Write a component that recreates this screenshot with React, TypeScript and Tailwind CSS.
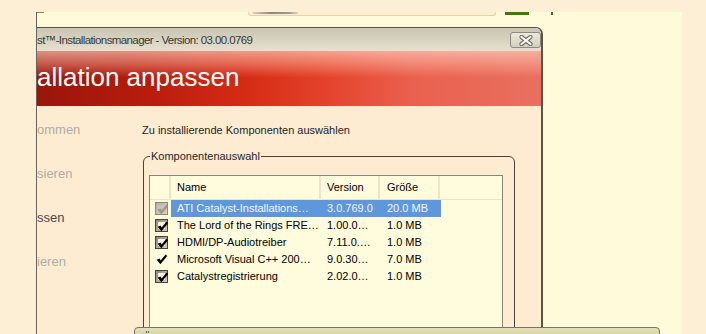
import React from 'react';

const rows = [
  { name: 'ATI Catalyst-Installations…', version: '3.0.769.0', size: '20.0 MB', state: 'disabled', selected: true },
  { name: 'The Lord of the Rings FRE…', version: '1.00.0…', size: '1.0 MB', state: 'box' },
  { name: 'HDMI/DP-Audiotreiber', version: '7.11.0.…', size: '1.0 MB', state: 'box' },
  { name: 'Microsoft Visual C++ 200…', version: '9.0.30…', size: '7.0 MB', state: 'plain' },
  { name: 'Catalystregistrierung', version: '2.02.0…', size: '1.0 MB', state: 'box' },
];

const steps = [
  { label: 'ommen', active: false },
  { label: 'sieren', active: false },
  { label: 'ssen', active: true },
  { label: 'ieren', active: false },
];

function Check({ color }: { color: string }) {
  return (
    <svg width="13" height="13" viewBox="0 0 13 13" className="absolute left-0 top-0">
      <path d="M1.6 6.8 L4.6 5.6 L5.6 7.6 L10.6 1.4 L12.2 3 L5.4 11.2 Z" fill={color} />
    </svg>
  );
}

function CheckCell({ state }: { state: string }) {
  if (state === 'plain') {
    return (
      <div className="relative ml-[5px] w-[13px] h-[13px]">
        <Check color="#000" />
      </div>
    );
  }
  const disabled = state === 'disabled';
  return (
    <div
      className={
        disabled
          ? 'relative ml-[5px] w-[13px] h-[13px] border border-[#8f897a] bg-[linear-gradient(135deg,#b8b2a4,#d6d0c2)] p-[2px]'
          : 'relative ml-[5px] w-[13px] h-[13px] border border-[#4a4334] bg-[linear-gradient(135deg,#8c8371,#d8d0bc)] p-[2px]'
      }
    >
      <div className={disabled ? 'w-full h-full bg-[#c9c3b5]' : 'w-full h-full bg-[#f7f3e6]'} />
      <Check color={disabled ? '#9d978a' : '#000'} />
    </div>
  );
}

export default function App() {
  return (
    <div className="relative w-[706px] h-[334px] overflow-hidden bg-[#fdefd6] font-['Liberation_Sans',Arial,sans-serif]">
      <div className="h-[12px]" />
      <div className="ml-[36px] w-[646px] h-[322px] bg-[#fffad9] border-l border-[#6b6256] flex flex-col">
        {/* strip above the dialog */}
        <div className="h-[15px] flex items-start shrink-0">
          <div className="w-[7px] h-px bg-[#8a8070]" />
          <div className="ml-[204px] w-[248px] h-[4px] border-x border-b border-[#e4d2ae] rounded-b-[3px] bg-[#fcecd2] pl-[4px]">
            <div className="w-[45px] h-[2px] bg-[linear-gradient(90deg,#d8d0c0,#8e887c_40%,#a29a8c_80%,#e0d8c8)]" />
          </div>
          <div className="ml-[9px] w-[24px] h-[3px] bg-[#3b7a05]" />
          <div className="ml-[22px] w-[2px] h-[3px] bg-[#3b7a05]" />
        </div>

        {/* dialog */}
        <div className="w-[506px] flex-1 flex flex-col border-t border-r-2 border-[#5b5346] rounded-tr-[7px] overflow-hidden bg-[#fdecd2]">
          <div className="h-[23px] shrink-0 flex items-start justify-between bg-[linear-gradient(180deg,#c9c5b2,#e5e1ce)]">
            <span className="text-[11.5px] tracking-[-0.6px] leading-[24px] text-[#3a3835] whitespace-nowrap">st™-Installationsmanager - Version: 03.00.0769</span>
            <div className="mt-[4px] w-[31px] h-[16px] rounded-[3px] border border-[#8d8a84] bg-[linear-gradient(180deg,#ece8da,#d3cfc0)] flex items-center justify-center">
              <svg width="16" height="11" viewBox="0 0 16 11">
                <path d="M3.5 2 L12.5 9 M12.5 2 L3.5 9" stroke="#6e6a64" strokeWidth="4.2" strokeLinecap="round" />
                <path d="M3.5 2 L12.5 9 M12.5 2 L3.5 9" stroke="#fbf8ee" strokeWidth="2.2" strokeLinecap="round" />
              </svg>
            </div>
          </div>

          <div className="h-[55px] shrink-0 pt-[13px] bg-[linear-gradient(180deg,rgba(255,210,195,0.65)_0%,rgba(255,190,170,0.4)_24%,rgba(255,255,255,0)_48%),linear-gradient(90deg,#98160a_0%,#b81c0c_22%,#d62c16_42%,#e4442c_58%,#ea604e_74%,#e8705f_100%)]">
            <div className="text-[26px] leading-[26px] text-white whitespace-nowrap">allation anpassen</div>
          </div>

          <div className="flex-1 flex">
            <div className="w-[105px] shrink-0 pt-[2px]">
              {steps.map((s) => (
                <div key={s.label} className={s.active ? 'h-[44px] flex items-center text-[13px] text-[#4c4944]' : 'h-[44px] flex items-center text-[13px] text-[#b0aca1]'}>
                  {s.label}
                </div>
              ))}
            </div>

            <div className="flex-1 pt-[18px]">
              <div className="text-[11px] leading-[13px] text-[#1e1e1e]">Zu installierende Komponenten auswählen</div>

              <fieldset className="mt-[13px] ml-[1px] w-[372px] h-[220px] border border-[#4a4236] rounded-[6px]">
                <legend className="ml-[6px] px-[1px] text-[11px] leading-[13px] text-[#1e1e1e]">Komponentenauswahl</legend>
                <div className="mt-[12px] ml-[5px] w-[354px] h-[200px] border border-[#8a8577] bg-[#fffbdc] text-[11px] text-black">
                  <div className="h-[24px] grid grid-cols-[21px_150px_59px_60px_1fr] border-b border-[#ebe5c9]">
                    <div className="border-r-2 border-[#ebe5c9]" />
                    <div className="border-r-2 border-[#ebe5c9] pl-[6px] leading-[23px]">Name</div>
                    <div className="border-r-2 border-[#ebe5c9] pl-[6px] leading-[23px]">Version</div>
                    <div className="border-r-2 border-[#ebe5c9] pl-[7px] leading-[23px]">Größe</div>
                    <div />
                  </div>
                  {rows.map((r) => (
                    <div key={r.name} className="h-[17px] grid grid-cols-[21px_270px_1fr] items-center">
                      <CheckCell state={r.state} />
                      <div className={r.selected ? 'h-[17px] grid grid-cols-[150px_59px_61px] items-center bg-[#5e97dc] text-[#f4f6ff]' : 'h-[17px] grid grid-cols-[150px_59px_61px] items-center'}>
                        <span className="pl-[6px] whitespace-nowrap">{r.name}</span>
                        <span className="pl-[6px] whitespace-nowrap">{r.version}</span>
                        <span className="pl-[7px] whitespace-nowrap">{r.size}</span>
                      </div>
                      <div />
                    </div>
                  ))}
                </div>
              </fieldset>
            </div>
          </div>
        </div>
      </div>

      {/* window edge peeking in at the bottom */}
      <div className="absolute left-[134px] top-[327px] w-[526px] h-[12px] border border-[#7a7262] rounded-t-[4px] bg-[linear-gradient(180deg,#e4e1b8,#cfcc9c)] pl-[11px] pt-[3px]">
        <div className="flex gap-[1px]">
          <div className="w-[1px] h-[2px] bg-[#6a665a]" />
          <div className="w-[1px] h-[2px] bg-[#6a665a]" />
        </div>
      </div>
    </div>
  );
}
